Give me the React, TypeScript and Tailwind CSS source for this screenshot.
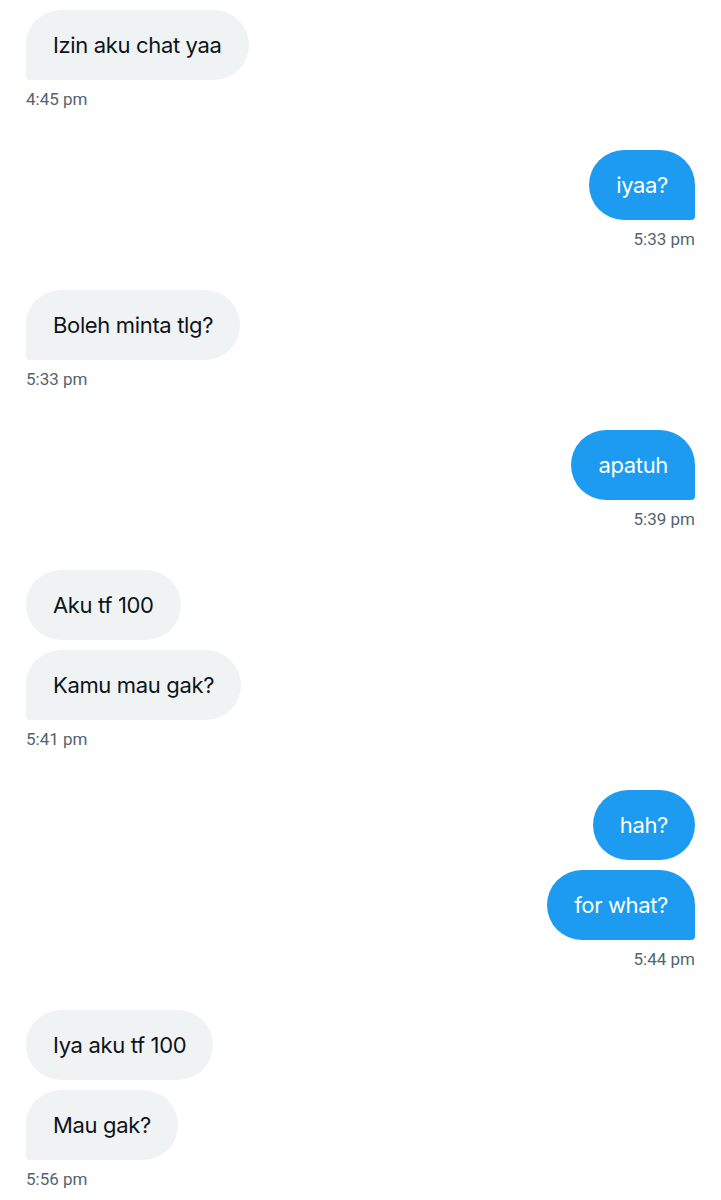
type Msg = { text: string }
type Group = { side: 'left' | 'right'; time: string; messages: Msg[] }

const groups: Group[] = [
  { side: 'left', time: '4:45 pm', messages: [{ text: 'Izin aku chat yaa' }] },
  { side: 'right', time: '5:33 pm', messages: [{ text: 'iyaa?' }] },
  { side: 'left', time: '5:33 pm', messages: [{ text: 'Boleh minta tlg?' }] },
  { side: 'right', time: '5:39 pm', messages: [{ text: 'apatuh' }] },
  { side: 'left', time: '5:41 pm', messages: [{ text: 'Aku tf 100' }, { text: 'Kamu mau gak?' }] },
  { side: 'right', time: '5:44 pm', messages: [{ text: 'hah?' }, { text: 'for what?' }] },
  { side: 'left', time: '5:56 pm', messages: [{ text: 'Iya aku tf 100' }, { text: 'Mau gak?' }] },
]

function Bubble({ text, side, last }: { text: string; side: 'left' | 'right'; last: boolean }) {
  const base = 'h-[70px] flex items-center px-[27px] text-[22px] tracking-[-0.35px] rounded-[35px]'
  const color = side === 'left' ? 'bg-[#eff3f4] text-[#0f1419]' : 'bg-[#1d9bf0] text-white'
  const corner = last ? (side === 'left' ? 'rounded-bl-[4px]' : 'rounded-br-[4px]') : ''
  return <div className={`${base} ${color} ${corner}`}>{text}</div>
}

export default function App() {
  return (
    <div className="min-h-screen bg-white px-[26px] pt-[10px]" style={{ fontFamily: "Inter, 'Open Sans', sans-serif" }}>
      <div className="flex flex-col gap-[41px]">
        {groups.map((g, gi) => (
          <div key={gi} className={`flex flex-col ${g.side === 'left' ? 'items-start' : 'items-end'}`}>
            <div className={`flex flex-col gap-[10px] ${g.side === 'left' ? 'items-start' : 'items-end'}`}>
              {g.messages.map((m, mi) => (
                <Bubble key={mi} text={m.text} side={g.side} last={mi === g.messages.length - 1} />
              ))}
            </div>
            <div className="mt-[9px] text-[17px] leading-[20px] text-[#536471]" style={{ fontFamily: 'Roboto, sans-serif' }}>
              {g.time}
            </div>
          </div>
        ))}
      </div>
    </div>
  )
}
